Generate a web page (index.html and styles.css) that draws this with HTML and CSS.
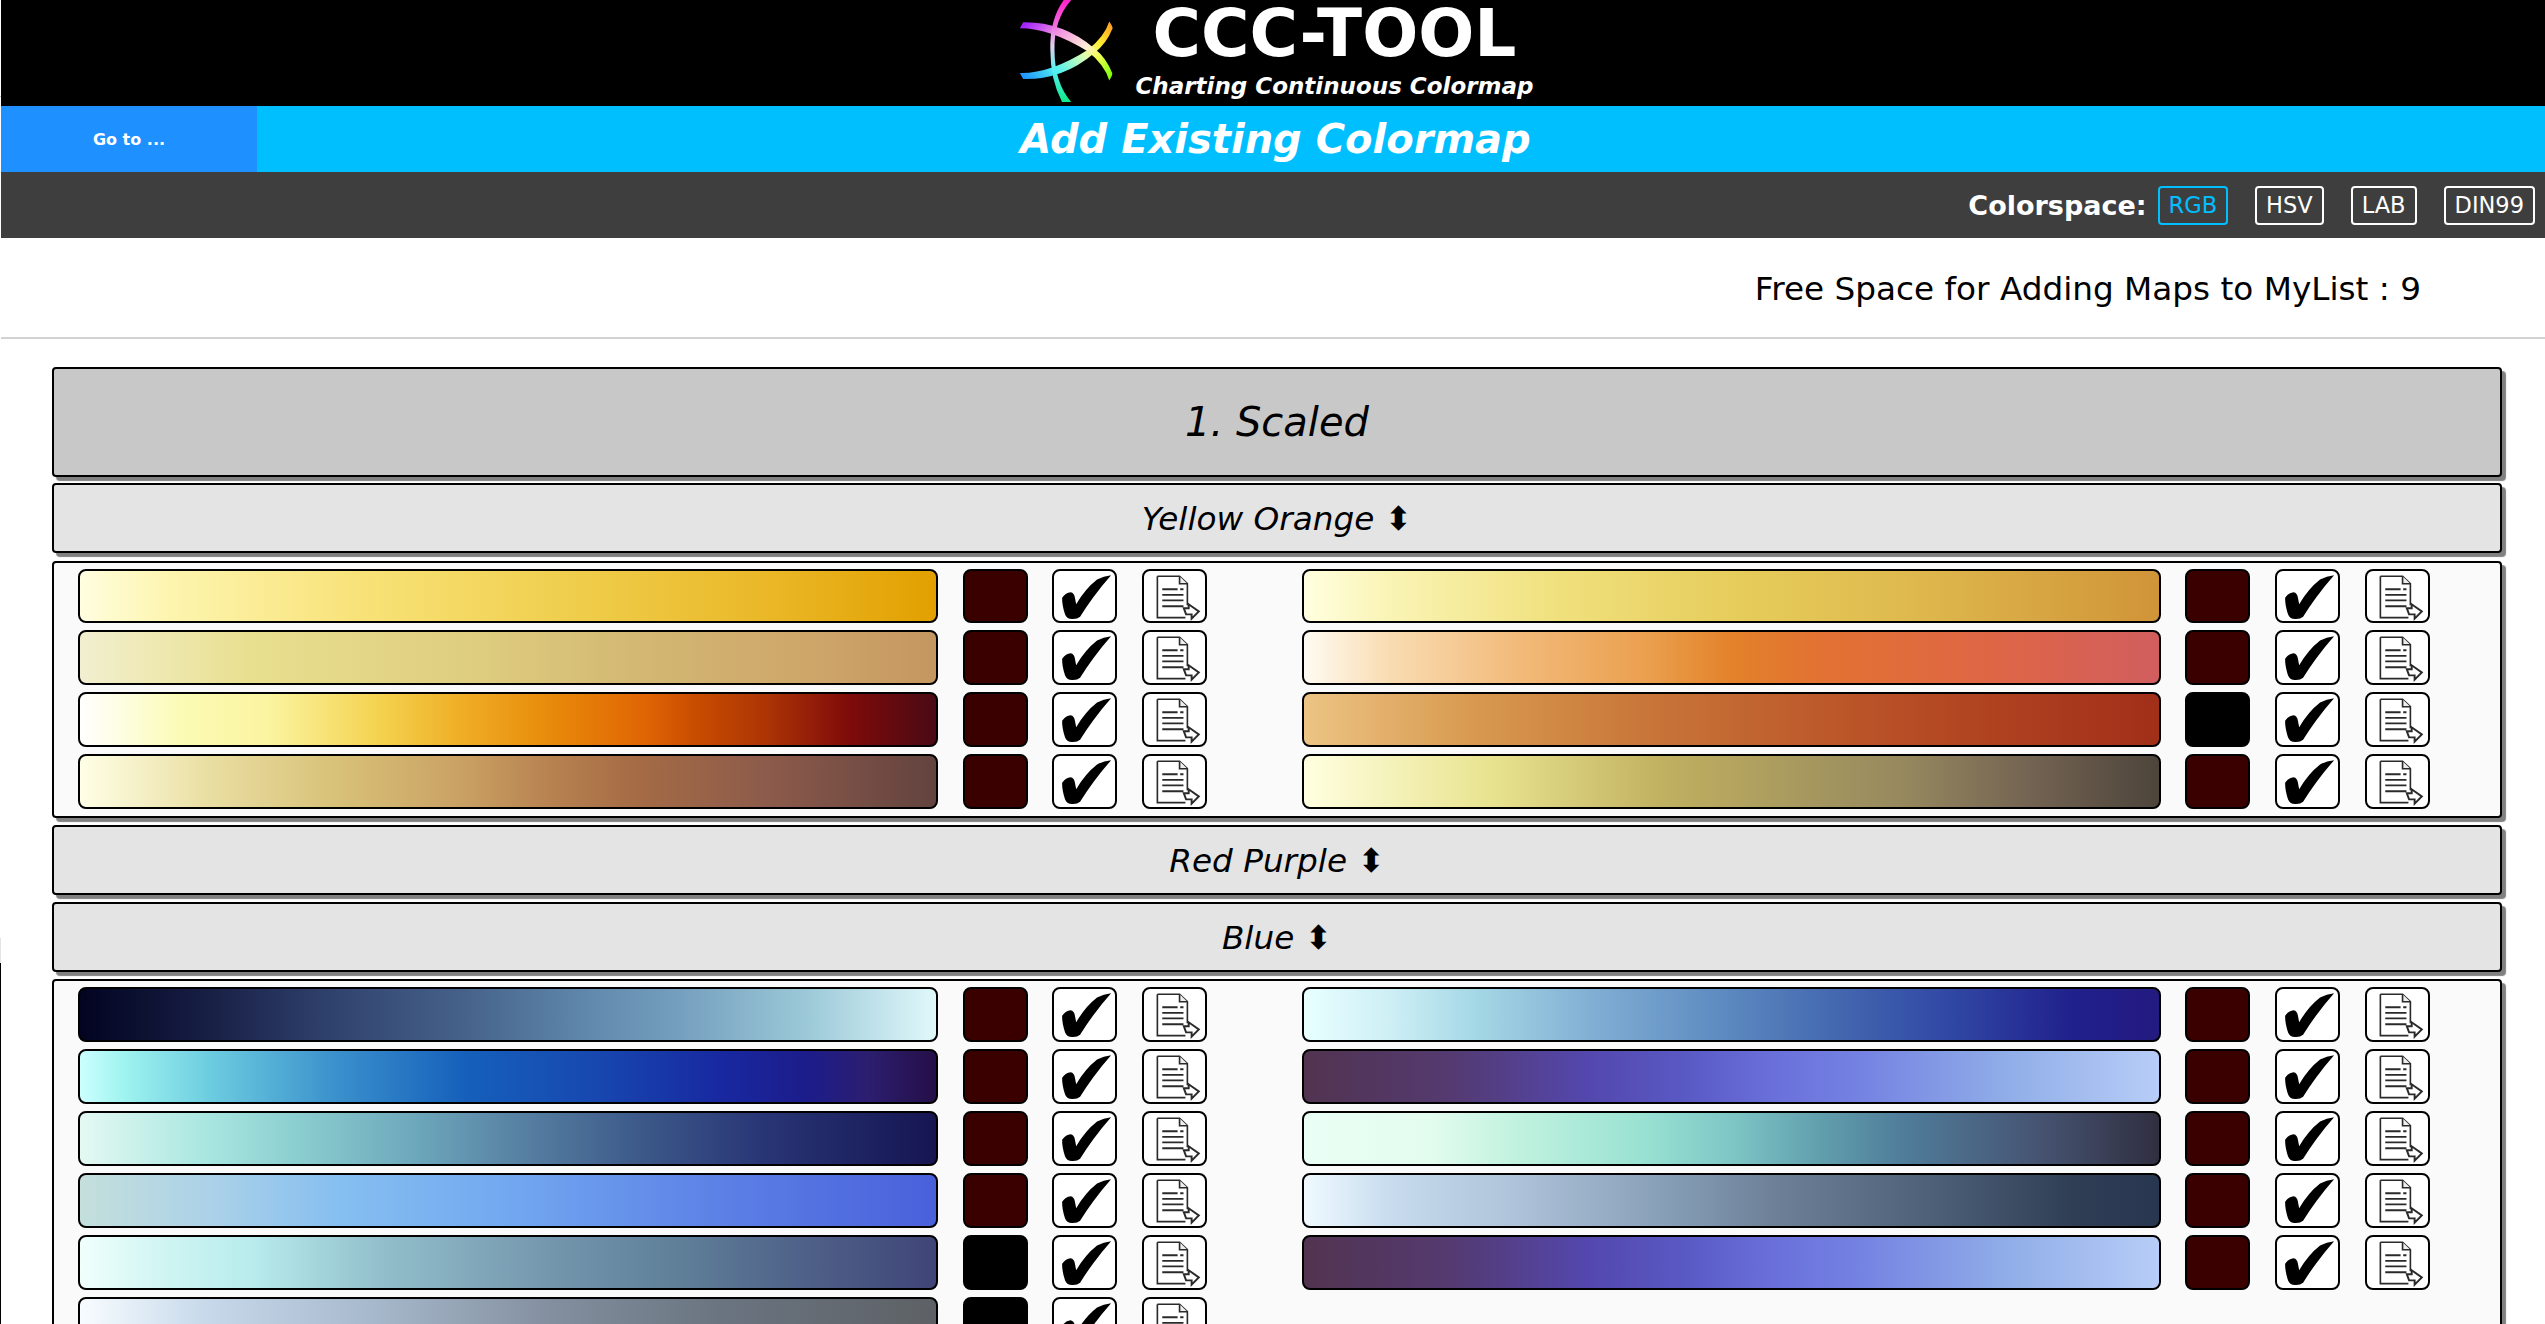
FILE: index.html
```html
<!DOCTYPE html>
<html lang="en">
<head>
<meta charset="utf-8">
<title>CCC-Tool</title>
<link rel="stylesheet" href="styles.css">
</head>
<body>
<svg class="defs" width="0" height="0" aria-hidden="true">
  <defs>
    <symbol id="check" viewBox="461 61 185 156">
      <path d="M485 143 Q496 127 511 126 Q522 128 524 142 L528 163 Q555 116 592 87 Q612 76 635 74 Q605 108 580 142 Q558 172 540 201 Q531 209 515 208 Q500 208 494 194 Q484 165 485 143Z" fill="#000"/>
    </symbol>
    <symbol id="doc" viewBox="730 61 185 156">
      <g fill="none" stroke="#2a2a2a" stroke-width="5">
        <path d="M770 77 H838 L862 100 V166 M770 77 V204 H856"/>
        <path d="M838 77 V100 H862" fill="#eee"/>
        <path d="M785 117 H832 M840 117 H850 M785 134 H850 M785 151 H850 M785 169 H850" stroke-width="5.5"/>
        <path d="M851 175 H866 V163 L897 185 L875 207 V194 H858Z" fill="#fff" stroke-width="6"/>
      </g>
    </symbol>
    <linearGradient id="arcA" gradientUnits="userSpaceOnUse" x1="280" y1="0" x2="280" y2="307">
      <stop offset="0" stop-color="#ff20c8"/><stop offset=".25" stop-color="#f070e0"/><stop offset=".45" stop-color="#e0d0f0"/><stop offset=".7" stop-color="#50f0f0"/><stop offset="1" stop-color="#10e888"/>
    </linearGradient>
    <linearGradient id="arcB" gradientUnits="userSpaceOnUse" x1="167" y1="85" x2="388" y2="240">
      <stop offset="0" stop-color="#a020ff"/><stop offset=".3" stop-color="#f090e0"/><stop offset=".6" stop-color="#ffeed8"/><stop offset=".75" stop-color="#f0ff50"/><stop offset="1" stop-color="#70ff00"/>
    </linearGradient>
    <linearGradient id="arcC" gradientUnits="userSpaceOnUse" x1="167" y1="225" x2="388" y2="70">
      <stop offset="0" stop-color="#1e90ff"/><stop offset=".3" stop-color="#50f0f0"/><stop offset=".6" stop-color="#e0ffb0"/><stop offset=".78" stop-color="#ffee30"/><stop offset="1" stop-color="#ff9a20"/>
    </linearGradient>
  </defs>
</svg>

<div class="edge edge-top"></div>
<div class="edge edge-light"></div>
<div class="edge edge-dark"></div>

<header class="brand">
  <svg class="logo" viewBox="165 0 225 307" preserveAspectRatio="none" role="img" aria-label="CCC-Tool logo">
    <path d="M167 220 Q240 222 330 150 Q370 110 381 65 Q392 85 388 88 Q375 130 345 160 Q270 240 175 238Z" fill="url(#arcC)"/>
    <path d="M175 67 Q270 65 345 145 Q375 175 388 220 Q390 225 381 242 Q370 195 330 155 Q240 85 167 85Z" fill="url(#arcB)"/>
    <path d="M272 0 Q238 60 240 150 Q240 240 268 307 L290 307 Q250 250 250 150 Q248 60 290 0Z" fill="url(#arcA)"/>
  </svg>
  <div class="brand-text">
    <h1 class="brand-title">CCC-TOOL</h1>
    <p class="brand-sub">Charting Continuous Colormap</p>
  </div>
</header>

<nav class="titlebar">
  <a class="goto">Go to ...</a>
  <h2 class="page-title">Add Existing Colormap</h2>
</nav>

<div class="spacebar">
  <span class="space-label">Colorspace:</span>
  <button class="space-btn active">RGB</button>
  <button class="space-btn">HSV</button>
  <button class="space-btn">LAB</button>
  <button class="space-btn">DIN99</button>
</div>

<div class="freebar"><span class="free-text">Free Space for Adding Maps to MyList : 9</span></div>

<main class="content">
  <div class="head head-main">1. Scaled</div>
  <div class="head head-sub">Yellow Orange ⬍</div>
  <section class="list list-first">
    <div class="row"><div class="bar y1"></div><div class="swatch"></div><div class="tool"><svg class="ico"><use href="#check"/></svg></div><div class="tool tool-doc"><svg class="ico"><use href="#doc"/></svg></div></div>
    <div class="row"><div class="bar r1"></div><div class="swatch"></div><div class="tool"><svg class="ico"><use href="#check"/></svg></div><div class="tool tool-doc"><svg class="ico"><use href="#doc"/></svg></div></div>
    <div class="row"><div class="bar y2"></div><div class="swatch"></div><div class="tool"><svg class="ico"><use href="#check"/></svg></div><div class="tool tool-doc"><svg class="ico"><use href="#doc"/></svg></div></div>
    <div class="row"><div class="bar r2"></div><div class="swatch"></div><div class="tool"><svg class="ico"><use href="#check"/></svg></div><div class="tool tool-doc"><svg class="ico"><use href="#doc"/></svg></div></div>
    <div class="row"><div class="bar y3"></div><div class="swatch"></div><div class="tool"><svg class="ico"><use href="#check"/></svg></div><div class="tool tool-doc"><svg class="ico"><use href="#doc"/></svg></div></div>
    <div class="row"><div class="bar r3"></div><div class="swatch swatch-black"></div><div class="tool"><svg class="ico"><use href="#check"/></svg></div><div class="tool tool-doc"><svg class="ico"><use href="#doc"/></svg></div></div>
    <div class="row"><div class="bar y4"></div><div class="swatch"></div><div class="tool"><svg class="ico"><use href="#check"/></svg></div><div class="tool tool-doc"><svg class="ico"><use href="#doc"/></svg></div></div>
    <div class="row"><div class="bar r4"></div><div class="swatch"></div><div class="tool"><svg class="ico"><use href="#check"/></svg></div><div class="tool tool-doc"><svg class="ico"><use href="#doc"/></svg></div></div>
  </section>
  <div class="head head-sub">Red Purple ⬍</div>
  <div class="head head-sub">Blue ⬍</div>
  <section class="list">
    <div class="row"><div class="bar b1"></div><div class="swatch"></div><div class="tool"><svg class="ico"><use href="#check"/></svg></div><div class="tool tool-doc"><svg class="ico"><use href="#doc"/></svg></div></div>
    <div class="row"><div class="bar c1"></div><div class="swatch"></div><div class="tool"><svg class="ico"><use href="#check"/></svg></div><div class="tool tool-doc"><svg class="ico"><use href="#doc"/></svg></div></div>
    <div class="row"><div class="bar b2"></div><div class="swatch"></div><div class="tool"><svg class="ico"><use href="#check"/></svg></div><div class="tool tool-doc"><svg class="ico"><use href="#doc"/></svg></div></div>
    <div class="row"><div class="bar c2"></div><div class="swatch"></div><div class="tool"><svg class="ico"><use href="#check"/></svg></div><div class="tool tool-doc"><svg class="ico"><use href="#doc"/></svg></div></div>
    <div class="row"><div class="bar b3"></div><div class="swatch"></div><div class="tool"><svg class="ico"><use href="#check"/></svg></div><div class="tool tool-doc"><svg class="ico"><use href="#doc"/></svg></div></div>
    <div class="row"><div class="bar c3"></div><div class="swatch"></div><div class="tool"><svg class="ico"><use href="#check"/></svg></div><div class="tool tool-doc"><svg class="ico"><use href="#doc"/></svg></div></div>
    <div class="row"><div class="bar b4"></div><div class="swatch"></div><div class="tool"><svg class="ico"><use href="#check"/></svg></div><div class="tool tool-doc"><svg class="ico"><use href="#doc"/></svg></div></div>
    <div class="row"><div class="bar c4"></div><div class="swatch"></div><div class="tool"><svg class="ico"><use href="#check"/></svg></div><div class="tool tool-doc"><svg class="ico"><use href="#doc"/></svg></div></div>
    <div class="row"><div class="bar b5"></div><div class="swatch swatch-black"></div><div class="tool"><svg class="ico"><use href="#check"/></svg></div><div class="tool tool-doc"><svg class="ico"><use href="#doc"/></svg></div></div>
    <div class="row"><div class="bar c2"></div><div class="swatch"></div><div class="tool"><svg class="ico"><use href="#check"/></svg></div><div class="tool tool-doc"><svg class="ico"><use href="#doc"/></svg></div></div>
    <div class="row"><div class="bar b6"></div><div class="swatch swatch-black"></div><div class="tool"><svg class="ico"><use href="#check"/></svg></div><div class="tool tool-doc"><svg class="ico"><use href="#doc"/></svg></div></div>
  </section>
</main>
</body>
</html>
```
FILE: styles.css
```css
* { box-sizing: border-box; }
html, body { margin: 0; height: 100%; overflow: hidden; background: #fff; }
body { padding-left: 1px; font-family: "DejaVu Sans", sans-serif; color: #000; position: relative; }
.defs { position: absolute; }

.edge { position: absolute; left: 0; width: 1px; }
.edge-top { top: 96px; height: 1px; background: #bbb; }
.edge-light { top: 938px; height: 25px; background: #e4e4e4; }
.edge-dark { top: 963px; bottom: 0; background: #000; }

.brand { height: 106px; background: #000; color: #fff; display: flex; justify-content: center; padding-left: 6px; gap: 23px; }
.logo { width: 94px; height: 102px; display: block; }
.brand-text { width: 397px; display: flex; flex-direction: column; align-items: center; }
.brand-title { margin: 1px 0 0; font-size: 66px; line-height: 66px; font-weight: 700; }
.brand-sub { margin: 4px 0 0; font-size: 23px; line-height: 30px; font-weight: 700; font-style: italic; white-space: nowrap; }

.titlebar { height: 66px; background: #00bfff; display: flex; align-items: center; position: relative; padding-left: 5px; }
.goto { position: absolute; left: 0; top: 0; width: 256px; height: 66px; background: #1e90ff; color: #fff; font-size: 16px; font-weight: 700; display: flex; align-items: center; justify-content: center; }
.page-title { margin: 0; width: 100%; text-align: center; color: #fff; font-size: 40px; font-weight: 700; font-style: italic; }

.spacebar { height: 66px; background: #3e3e3e; color: #fff; display: flex; align-items: center; justify-content: flex-end; padding-right: 10px; gap: 27px; }
.space-label { font-size: 27px; font-weight: 700; margin-right: -16px; }
.space-btn { height: 39px; padding: 0 9px; background: transparent; border: 2px solid #fff; border-radius: 4px; color: #fff; font-family: inherit; font-size: 22.5px; }
.space-btn.active { color: #00bfff; border-color: #00bfff; }

.freebar { height: 101px; padding: 2px 124px 0 0; border-bottom: 2px solid #d2d2d2; display: flex; align-items: center; justify-content: flex-end; }
.free-text { font-size: 32.7px; }

.content { display: flex; flex-direction: column; gap: 7px; margin: 28px 43px 0 51px; }
.head { display: flex; align-items: center; justify-content: center; border: 2px solid #000; border-radius: 4px; box-shadow: 4px 4px 1px #808080; font-style: italic; }
.head-main { height: 110px; background: #c8c8c8; font-size: 40px; margin-bottom: -1px; }
.head-sub { height: 70px; padding-top: 2px; background: #e4e4e4; font-size: 32.7px; }

.list { display: grid; grid-template-columns: 1129px 1129px; column-gap: 95px; row-gap: 7px; padding: 6px 0 7px 24px; border: 2px solid #000; border-radius: 4px; background: #fafafa; box-shadow: 4px 4px 1px #808080; }
.list-first { margin-top: .6px; }
.row { display: flex; height: 54.9px; }
.bar { width: 860px; border: 2px solid #000; border-radius: 8px; }
.swatch { width: 65px; margin-left: 25px; border: 2px solid #000; border-radius: 8px; background: #3a0000; }
.swatch-black { background: #000; }
.tool { width: 65px; margin-left: 24px; border: 2px solid #000; border-radius: 8px; background: #fff; }
.tool-doc { margin-left: 25px; }
.row:nth-child(even) .bar { width: 859px; }
.row:nth-child(even) .swatch { margin-left: 24px; }
.row:nth-child(even) .tool { margin-left: 25px; }
.ico { display: block; width: 100%; height: 100%; }

.y1 { background: linear-gradient(90deg, #fffee0, #fdf5b0 10%, #f8e278 33%, #f0d050 55%, #eab828 80%, #e2a000); }
.y2 { background: linear-gradient(90deg, #f1efd0, #efe9b5 8%, #e8df8f 20%, #dfce80 45%, #d3b873 65%, #cea66a 85%, #c49660); }
.y3 { background: linear-gradient(90deg, #fff, #fbfbb5 12%, #fbf4a0 22%, #f4d24f 35%, #efac24 45%, #e88a0a 55%, #e06504 66%, #c84c00 72%, #ad3505 80%, #7e0a0a 90%, #4a0a14); }
.y4 { background: linear-gradient(90deg, #ffffe6, #e9dea2 15%, #d8c178 30%, #c9a063 45%, #b78250 55%, #a56b45 65%, #8d5b4b 80%, #63433f); }
.r1 { background: linear-gradient(90deg, #ffffe0, #faf4b5 10%, #f0e07c 30%, #e6cd5c 50%, #dfba4e 70%, #d09438); }
.r2 { background: linear-gradient(90deg, #fffbf2, #f9dcb2 10%, #f2ba7a 25%, #eaa04e 40%, #e3822a 50%, #e27232 60%, #df6645 80%, #d15e5e); }
.r3 { background: linear-gradient(90deg, #ecc484, #d8994f 20%, #c87639 40%, #bd5a2b 60%, #b04220 80%, #a12f19); }
.r4 { background: linear-gradient(90deg, #ffffe0, #e8e38e 22%, #c0b060 42%, #a99a5f 57%, #96895e 70%, #736352 85%, #4d443b); }
.b1 { background: linear-gradient(90deg, #020420, #181f45 15%, #30436f 30%, #46628a 45%, #618aae 60%, #759fbe 70%, #9cc9d8 85%, #e0f8fa); }
.b2 { background: linear-gradient(90deg, #ccffff, #a0f4f0 5%, #6dcde0 15%, #3a90cc 30%, #1560bb 45%, #1748b0 60%, #1828a0 75%, #1c1c8a 85%, #2c1e70 92%, #250f48); }
.b3 { background: linear-gradient(90deg, #e4f9f2, #a8e6e0 15%, #8ccfd0 25%, #6ba5ba 40%, #5a85a5 50%, #3d5a8a 65%, #283575 80%, #161552); }
.b4 { background: linear-gradient(90deg, #c4dfdc, #acd2e8 15%, #86bff0 30%, #72a8f0 50%, #5c80e6 75%, #4960da); }
.b5 { background: linear-gradient(90deg, #f0fffc, #cff5f2 10%, #b8eced 20%, #92bfcb 35%, #7496ad 55%, #5f7f99 70%, #4e6088 85%, #3f4577); }
.b6 { background: linear-gradient(90deg, #f8fcff, #c6d8ea 15%, #a5b7ca 35%, #838f9f 55%, #6a7480 75%, #5d6165); }
.c1 { background: linear-gradient(90deg, #e8ffff, #ceeff5 10%, #a5d8e6 20%, #7dabd2 35%, #5b88bf 50%, #4468b0 62%, #3149a5 75%, #20208c 90%, #241a80); }
.c2 { background: linear-gradient(90deg, #523350, #543a70 17%, #5347ad 33%, #5a5ac5 45%, #6a70da 55%, #7482e2 65%, #90ade8 82%, #b7cdf7); }
.c3 { background: linear-gradient(90deg, #eafff5, #e2fcee 15%, #c0f2de 25%, #98e1d2 40%, #7ec6c6 50%, #62a0ae 60%, #4f7d9a 70%, #475675 85%, #302f40); }
.c4 { background: linear-gradient(90deg, #f0faff, #c8dcee 10%, #aec2d9 25%, #8099b1 45%, #6e8098 55%, #4a5d75 75%, #2f3e55 90%, #283650); }
```
